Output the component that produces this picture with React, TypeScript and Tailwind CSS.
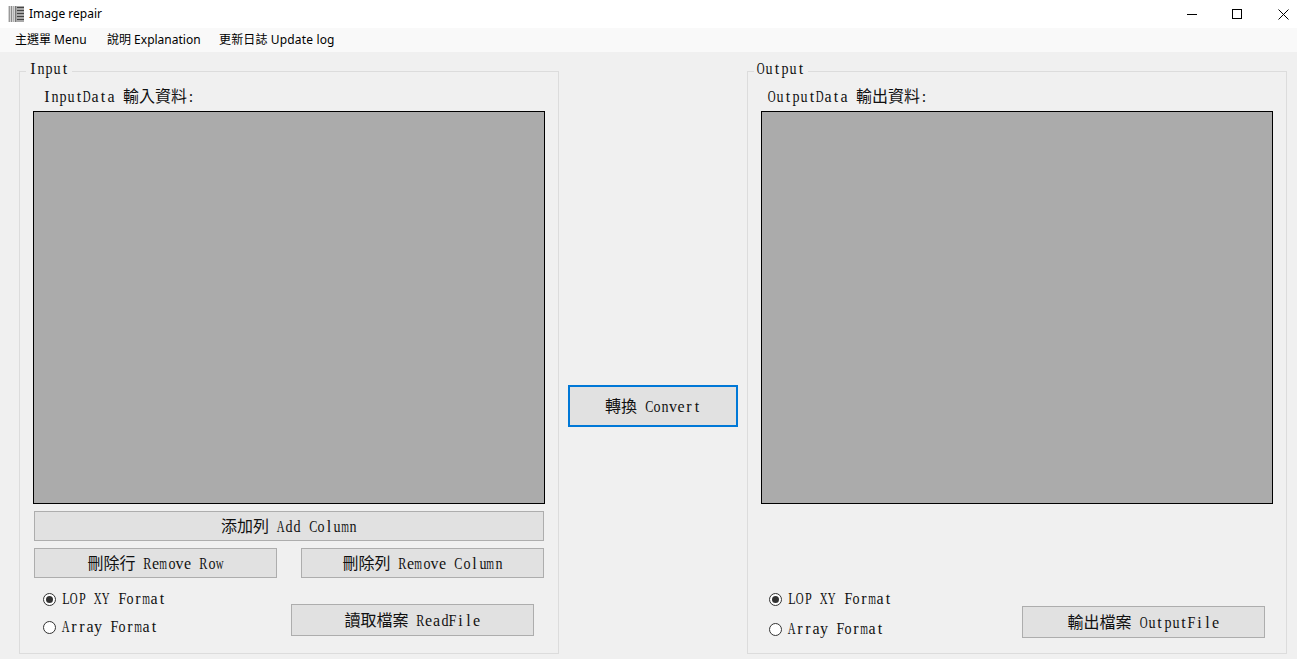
const cell = "font-['Liberation_Serif','Noto_Sans_CJK_TC',serif] text-[16px] leading-none text-[#111]";

const SCALE_62 = "m";
const SCALE_68 = "wAXYDOV";
const SCALE_76 = "CRLEBPN";
const SCALE_88 = "Fnuhdpbok";

function glyphClass(c: string) {
  if (SCALE_62.includes(c)) return "scale-x-[.62]";
  if (SCALE_68.includes(c)) return "scale-x-[.68]";
  if (SCALE_76.includes(c)) return "scale-x-[.76]";
  if (SCALE_88.includes(c)) return "scale-x-[.88]";
  return "";
}

function Ming({ text }: { text: string }) {
  return (
    <span className={`inline-flex whitespace-pre ${cell}`}>
      {Array.from(text).map((c, i) =>
        c.charCodeAt(0) > 255 ? (
          <span key={i} className="inline-flex w-4 justify-center">{c}</span>
        ) : (
          <span key={i} className="inline-flex w-2 justify-center">
            <span className={`inline-block ${glyphClass(c)}`}>{c}</span>
          </span>
        )
      )}
    </span>
  );
}

function Btn({ w, h, text, focused }: { w: string; h: string; text: string; focused?: boolean }) {
  return (
    <div className={`${w} ${h} flex items-center justify-center pt-px bg-[#e1e1e1] ${focused ? 'border-2 border-[#0078d7]' : 'border border-[#adadad]'}`}>
      <Ming text={text} />
    </div>
  );
}

function Radio({ label, checked }: { label: string; checked?: boolean }) {
  return (
    <div className="flex items-center gap-[6px] h-4">
      <span className="w-[13px] h-[13px] rounded-full bg-white border border-[#333] flex items-center justify-center">
        {checked && <span className="w-[7px] h-[7px] rounded-full bg-[#333]" />}
      </span>
      <Ming text={label} />
    </div>
  );
}

function Group({ title, children }: { title: string; children: React.ReactNode }) {
  return (
    <div className="relative w-[540px] h-[583px] border border-[#dcdcdc] flex flex-col">
      <span className="absolute left-[6px] top-[-11px] px-[3px] bg-[#f0f0f0] flex"><Ming text={title} /></span>
      {children}
    </div>
  );
}

function Grid() {
  return <div className="ml-[13px] w-[512px] h-[393px] bg-[#ababab] border border-black" />;
}

export default function App() {
  return (
    <div className="w-[1297px] h-[659px] overflow-hidden bg-[#f0f0f0] flex flex-col font-['Noto_Sans','Noto_Sans_CJK_TC',sans-serif]">
      <div className="h-7 bg-white flex items-center shrink-0">
        <svg className="ml-2 w-[17px] h-[16px] shrink-0" viewBox="0 0 17 16" shapeRendering="crispEdges">
          <rect x="0" y="0" width="8" height="16" fill="#d4d4d4" />
          <rect x="1" y="0" width="1" height="16" fill="#9a9a9a" />
          <rect x="3" y="0" width="1" height="16" fill="#8a8a8a" />
          <rect x="5" y="0" width="1" height="16" fill="#b0b0b0" />
          <rect x="7" y="0" width="1" height="16" fill="#777" />
          <rect x="8" y="0" width="8" height="16" fill="#a8a8a8" />
          <rect x="9" y="1" width="7" height="1" fill="#444" />
          <rect x="9" y="4" width="7" height="1" fill="#444" />
          <rect x="9" y="7" width="7" height="1" fill="#444" />
          <rect x="9" y="10" width="7" height="1" fill="#444" />
          <rect x="9" y="13" width="7" height="1" fill="#444" />
        </svg>
        <span className="ml-1 text-[12px] text-black">Image repair</span>
        <div className="ml-auto flex items-center h-full">
          <svg className="w-[11px] h-[11px]" viewBox="0 0 11 11" shapeRendering="crispEdges"><rect x="0" y="5" width="10" height="1" fill="#000" /></svg>
          <svg className="ml-[34px] w-[11px] h-[11px]" viewBox="0 0 11 11" shapeRendering="crispEdges"><rect x="0.5" y="0.5" width="9" height="9" fill="none" stroke="#000" /></svg>
          <svg className="ml-[35px] mr-[8px] w-[11px] h-[11px]" viewBox="0 0 11 11"><path d="M0.5 0.5 L10.5 10.5 M10.5 0.5 L0.5 10.5" stroke="#000" fill="none" /></svg>
        </div>
      </div>
      <div className="h-6 bg-[#f9f9f9] flex items-center pl-[15px] shrink-0 text-[12px] text-black">
        <span className="w-[92px]">主選單 Menu</span>
        <span className="w-[112px]">說明 Explanation</span>
        <span className="tracking-[0.15px]">更新日誌 Update log</span>
      </div>
      <div className="flex items-start pl-[19px] pt-[19px]">
        <Group title="Input">
          <div className="ml-[23px] mt-[17px] mb-[6px] h-4 flex"><Ming text="InputData 輸入資料:" /></div>
          <Grid />
          <div className="ml-[14px] mt-[7px] flex flex-col gap-[7px]">
            <Btn w="w-[510px]" h="h-[30px]" text="添加列 Add Column" />
            <div className="flex gap-[24px]">
              <Btn w="w-[243px]" h="h-[30px]" text="刪除行 Remove Row" />
              <Btn w="w-[243px]" h="h-[30px]" text="刪除列 Remove Column" />
            </div>
          </div>
          <div className="flex items-start ml-[23px]">
            <div className="mt-[13px] flex flex-col gap-[12px]">
              <Radio label="LOP XY Format" checked />
              <Radio label="Array Format" />
            </div>
            <div className="ml-[125px] mt-[26px]">
              <Btn w="w-[243px]" h="h-[32px]" text="讀取檔案 ReadFile" />
            </div>
          </div>
        </Group>
        <div className="w-[188px] h-[583px] flex items-start justify-center pt-[314px]">
          <Btn w="w-[170px]" h="h-[42px]" text="轉換 Convert" focused />
        </div>
        <Group title="Output">
          <div className="ml-[20px] mt-[17px] mb-[6px] h-4 flex"><Ming text="OutputData 輸出資料:" /></div>
          <Grid />
          <div className="flex items-start ml-[21px]">
            <div className="mt-[87px] flex flex-col gap-[14px]">
              <Radio label="LOP XY Format" checked />
              <Radio label="Array Format" />
            </div>
            <div className="ml-[130px] mt-[102px]">
              <Btn w="w-[243px]" h="h-[32px]" text="輸出檔案 OutputFile" />
            </div>
          </div>
        </Group>
      </div>
    </div>
  );
}
